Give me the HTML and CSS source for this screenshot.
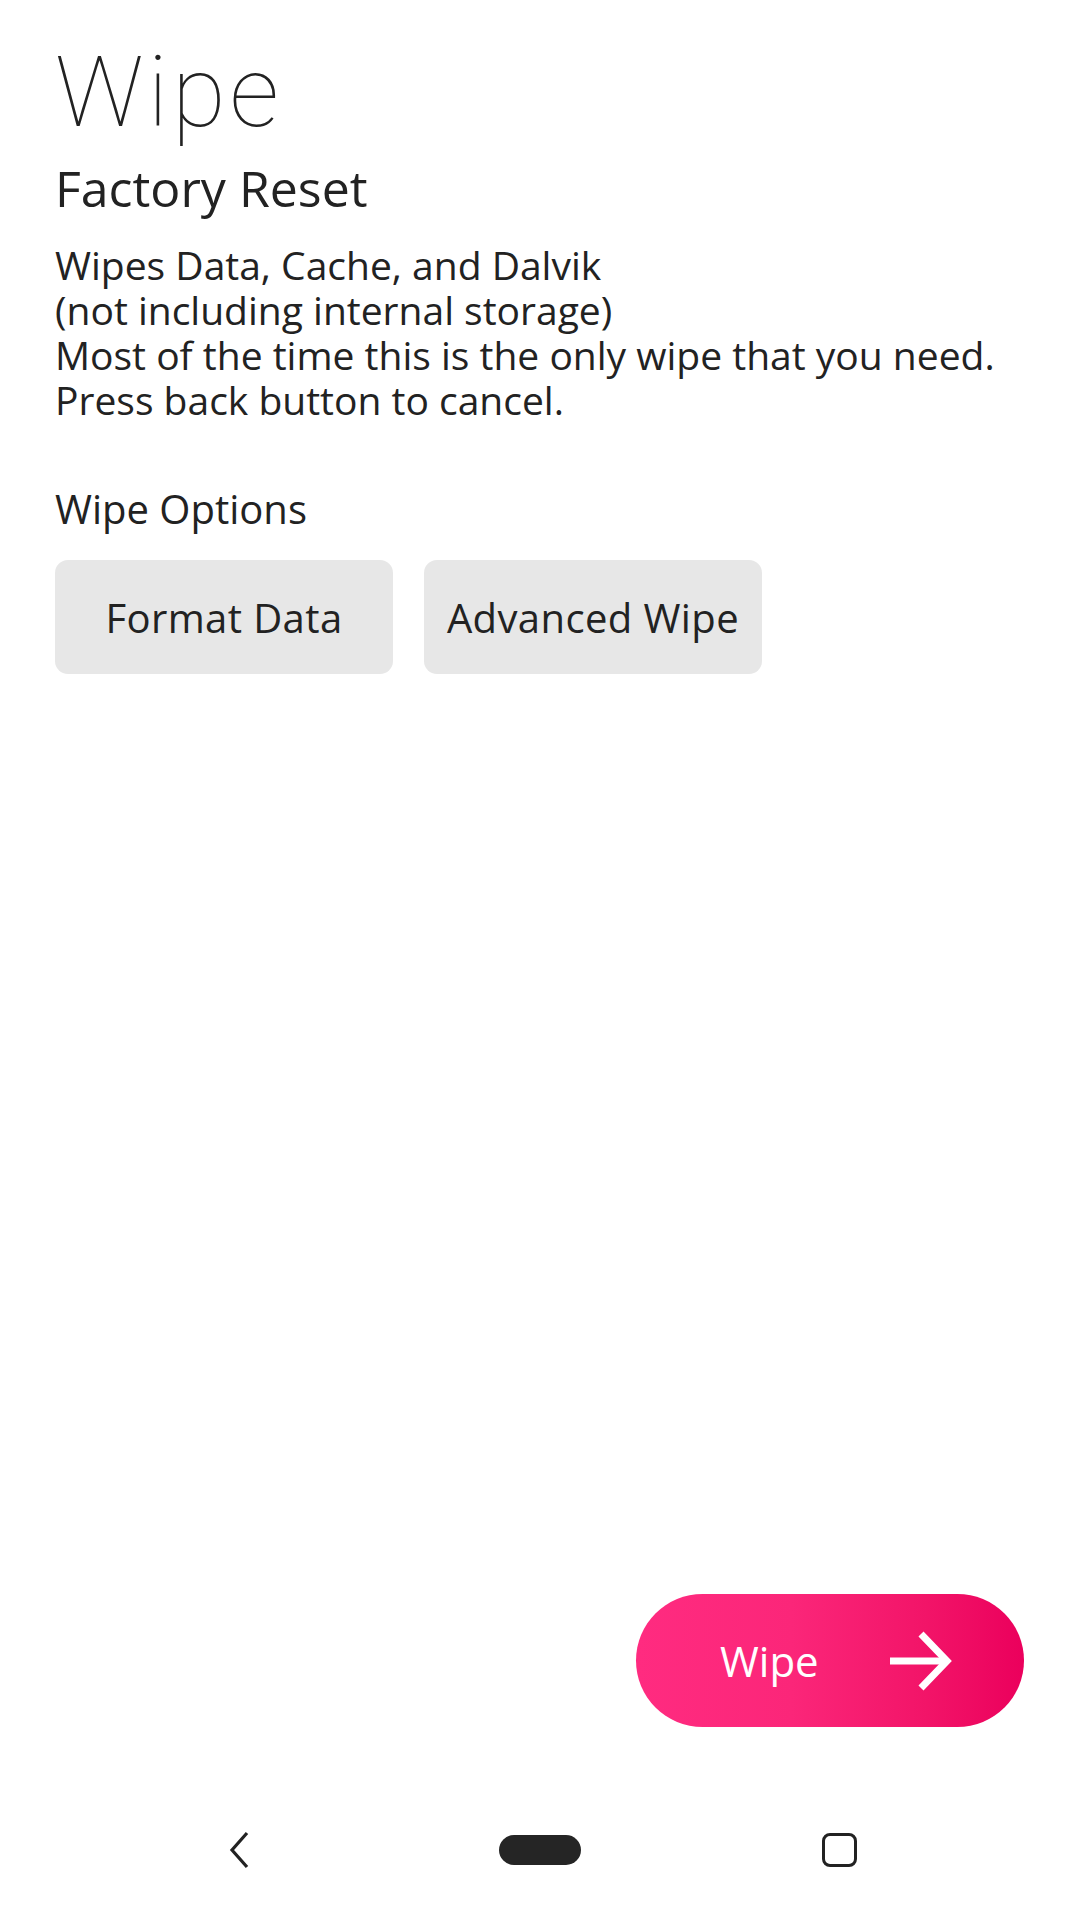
FILE: index.html
```html
<!DOCTYPE html>
<html lang="en">
<head>
<meta charset="utf-8">
<title>Wipe</title>
<link rel="stylesheet" href="styles.css">
</head>
<body>
<div class="screen">
  <main class="content">
    <h1 class="title">Wipe</h1>
    <h2 class="subtitle">Factory Reset</h2>
    <p class="desc">Wipes Data, Cache, and Dalvik<br>(not including internal storage)<br>Most of the time this is the only wipe that you need.<br>Press back button to cancel.</p>
    <h3 class="section-label">Wipe Options</h3>
    <div class="options">
      <button class="opt-btn">Format Data</button>
      <button class="opt-btn">Advanced Wipe</button>
    </div>
  </main>
  <div class="spacer"></div>
  <div class="action-row">
    <button class="wipe-btn">
      <span class="wipe-label">Wipe</span>
      <svg class="wipe-arrow" viewBox="0 0 62 60" width="62" height="60" aria-hidden="true">
        <path d="M0 30 H56" fill="none" stroke="#fff" stroke-width="7"/>
        <path d="M31 3 L57 30 L31 57" fill="none" stroke="#fff" stroke-width="7"/>
      </svg>
    </button>
  </div>
  <nav class="navbar">
    <svg class="nav-back" viewBox="0 0 24 38" width="24" height="38" aria-hidden="true">
      <path d="M19 2 L4 19 L19 36" fill="none" stroke="#222" stroke-width="3.2"/>
    </svg>
    <div class="nav-home"></div>
    <div class="nav-recent"></div>
  </nav>
</div>
</body>
</html>
```
FILE: styles.css
```css
* { box-sizing: border-box; }
html, body { margin: 0; padding: 0; background: #fff; }
body {
  font-family: "Open Sans", "Noto Sans", sans-serif;
  color: #222;
}
.screen {
  width: 1080px;
  height: 1920px;
  display: flex;
  flex-direction: column;
}
.content {
  padding: 0 55px;
  display: flex;
  flex-direction: column;
}
.title {
  margin: 38px 0 0;
  font-family: Roboto, "Open Sans", sans-serif;
  font-weight: 100;
  font-size: 98px;
  line-height: 110px;
  letter-spacing: 4px;
}
.subtitle {
  margin: 10px 0 0;
  font-weight: 400;
  font-size: 50px;
  line-height: 60px;
}
.desc {
  margin: 24px 0 0;
  font-size: 39px;
  line-height: 45px;
}
.section-label {
  margin: 62px 0 0;
  font-weight: 400;
  font-size: 40px;
  line-height: 50px;
}
.options {
  display: flex;
  gap: 31px;
  margin-top: 26px;
}
.opt-btn {
  width: 338px;
  height: 114px;
  border: none;
  border-radius: 13px;
  background: #e7e7e7;
  color: #222;
  font-family: "Open Sans", "Noto Sans", sans-serif;
  font-size: 40px;
  letter-spacing: 0.4px;
  padding: 0;
}
.spacer { flex: 1; }
.action-row {
  display: flex;
  justify-content: flex-end;
  padding-right: 56px;
  margin-bottom: 53px;
}
.wipe-btn {
  width: 388px;
  height: 133px;
  border: none;
  border-radius: 67px;
  background: linear-gradient(90deg, #ff2b80 0%, #fb2679 40%, #f21468 75%, #eb005c 100%);
  display: flex;
  align-items: center;
  padding: 0 0 0 84px;
  gap: 70px;
  color: #fff;
  font-family: "Open Sans", "Noto Sans", sans-serif;
  font-size: 42px;
}
.wipe-label { width: 100px; text-align: left; }
.navbar {
  height: 140px;
  display: flex;
  align-items: center;
  padding-left: 228px;
}
.nav-home {
  margin-left: 247px;
  width: 82px;
  height: 30px;
  border-radius: 15px;
  background: #252525;
}
.nav-recent {
  margin-left: 241px;
  width: 35px;
  height: 34px;
  border: 3.5px solid #222;
  border-radius: 8px;
}
```
